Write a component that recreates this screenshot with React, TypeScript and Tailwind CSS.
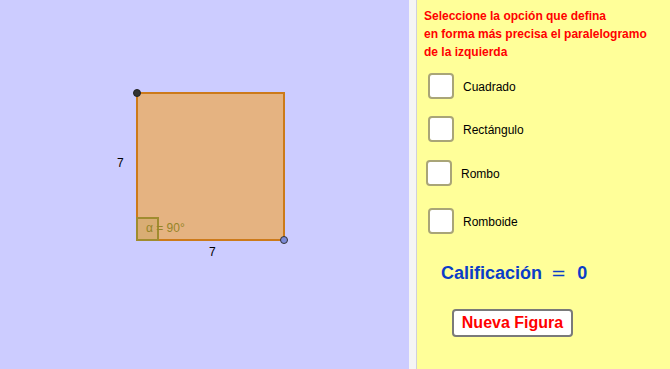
export default function App() {
  const checks = [
    { label: 'Cuadrado', box: 'ml-[11px]', gap: 'mt-[12px]' },
    { label: 'Rectángulo', box: 'ml-[11px]', gap: 'mt-[17px]' },
    { label: 'Rombo', box: 'ml-[9px]', gap: 'mt-[18px]' },
    { label: 'Romboide', box: 'ml-[11px]', gap: 'mt-[22px]' },
  ];

  return (
    <div className="flex w-[670px] h-[369px] overflow-hidden font-['Liberation_Sans',Arial,sans-serif]">
      {/* vista gráfica */}
      <div className="w-[409px] h-full bg-[#ccccff]">
        <svg width="409" height="369" viewBox="0 0 409 369">
          <rect x="137" y="93" width="147" height="147" fill="#e5b381" stroke="#cc7a1a" strokeWidth="2" />
          <rect x="137" y="218" width="21" height="22" fill="#d9ad74" stroke="#a08c2f" strokeWidth="2" />
          <text x="146" y="232" fontSize="12" fill="#958528" fontFamily="Liberation Sans, Arial, sans-serif">α = 90°</text>
          <text x="117" y="167" fontSize="12" fill="#000" fontFamily="Liberation Sans, Arial, sans-serif">7</text>
          <text x="209" y="256" fontSize="12" fill="#000" fontFamily="Liberation Sans, Arial, sans-serif">7</text>
          <circle cx="137" cy="93" r="3.5" fill="#333333" stroke="#222" strokeWidth="1" />
          <circle cx="284" cy="240" r="3.5" fill="#7b8ad8" stroke="#333" strokeWidth="1" />
        </svg>
      </div>

      {/* divisor */}
      <div className="w-[8px] h-full bg-[#f5f5f5] border-r border-[#d0d0dc]" />

      {/* panel derecho */}
      <div className="flex-1 h-full bg-[#ffff99] flex flex-col pt-[7px]">
        <p className="pl-[7px] text-[12px] leading-[18px] font-bold text-[#ff0000]">
          Seleccione la opción que defina
          <br />
          en forma más precisa el paralelogramo
          <br />
          de la izquierda
        </p>

        {checks.map((c) => (
          <div key={c.label} className={`flex items-center ${c.gap}`}>
            <div className={`w-[26px] h-[26px] ${c.box} rounded-[4px] border-2 border-[#a9a578] bg-white`} />
            <span className="ml-[9px] mt-[2px] text-[12px] text-black">{c.label}</span>
          </div>
        ))}

        <div className="mt-[27px] ml-[24px] flex items-center text-[18px] font-bold text-[#0b3dc8] leading-[24px]">
          <span>Calificación</span>
          <span className="ml-[9px] font-['DejaVu_Sans',sans-serif] font-normal">=</span>
          <span className="ml-[11px]">0</span>
        </div>

        <div className="mt-[24px] ml-[35px]">
          <button className="w-[121px] h-[28px] rounded-[4px] border-2 border-[#7a7a7a] bg-white text-[16px] font-bold text-[#ff0000] leading-none">
            Nueva Figura
          </button>
        </div>
      </div>
    </div>
  );
}
